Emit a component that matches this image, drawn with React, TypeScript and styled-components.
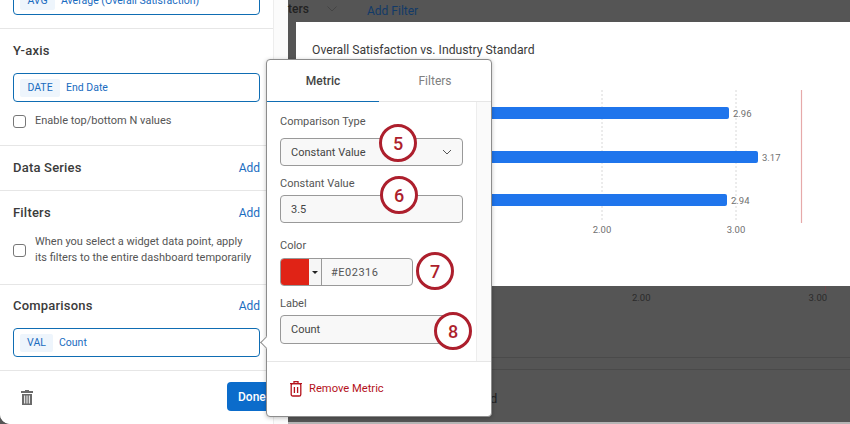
import React from "react";
import styled, { createGlobalStyle } from "styled-components";

const Global = createGlobalStyle`
  html, body { margin: 0; padding: 0; background: #555; }
  * { box-sizing: border-box; }
  body { font-family: Roboto, "Noto Sans", Arial, sans-serif; }
`;

const Page = styled.div`
  position: relative;
  width: 850px;
  height: 424px;
  overflow: hidden;
  display: flex;
  background: #555;
`;

const Side = styled.aside`
  width: 288px;
  flex: none;
  display: flex;
  background: #fbfbfb;
  border-bottom-left-radius: 10px;
  overflow: hidden;
`;

const Panel = styled.div`
  width: 274px;
  flex: none;
  height: 424px;
  background: #fff;
  border-right: 1px solid #ededed;
  display: flex;
  flex-direction: column;
`;

const Section = styled.section<{ $pad: string; $height: number }>`
  height: ${(p) => p.$height}px;
  flex: none;
  padding: ${(p) => p.$pad};
  border-bottom: 1px solid #e6e6e6;
  display: flex;
  flex-direction: column;
`;

const TitleRow = styled.div`
  display: flex;
  align-items: center;
  justify-content: space-between;
  height: 18px;
  flex: none;
`;

const Title = styled.h3`
  margin: 0;
  font-size: 13px;
  line-height: 18px;
  font-weight: 500;
  letter-spacing: 0.2px;
  color: #3b3b3b;
`;

const AddLink = styled.a`
  font-size: 12px;
  color: #1a6cbf;
`;

const FieldCard = styled.div<{ $gap: number; $offset?: number }>`
  height: 29px;
  flex: none;
  margin-top: ${(p) => p.$offset ?? 13}px;
  border: 1px solid #0f6db3;
  border-radius: 4px;
  display: flex;
  align-items: center;
  gap: ${(p) => p.$gap}px;
  padding: 0 6px;
  color: #1a6cbf;
  font-size: 10.5px;
`;

const Tag = styled.span<{ $width: number }>`
  width: ${(p) => p.$width}px;
  height: 18px;
  background: #eef5fc;
  display: flex;
  align-items: center;
  justify-content: center;
  border-radius: 2px;
`;

const CheckRow = styled.label<{ $mt: number }>`
  margin-top: ${(p) => p.$mt}px;
  display: flex;
  align-items: center;
  gap: 9px;
  font-size: 11px;
  line-height: 16px;
  color: #555;
  white-space: nowrap;
`;

const Check = styled.span`
  width: 13px;
  height: 13px;
  flex: none;
  border: 1px solid #777;
  border-radius: 3px;
  background: #fff;
`;

const Footer = styled.footer`
  flex: 1;
  display: flex;
  align-items: center;
  justify-content: space-between;
  padding: 0 0 2px 21px;
`;

const DoneButton = styled.button`
  width: 46px;
  height: 29px;
  border: 0;
  border-radius: 4px 0 0 4px;
  background: #0b6ccb;
  color: #fff;
  font: 500 12px Roboto, sans-serif;
  text-align: left;
  padding: 0 0 0 11px;
`;

const Main = styled.main`
  flex: 1;
  display: flex;
  flex-direction: column;
  border-bottom: 2px solid #b5b5b5;
`;

const Toolbar = styled.div`
  height: 22px;
  flex: none;
  display: flex;
  align-items: center;
  font-size: 12px;
`;

const ToolbarLabel = styled.span`
  color: #222;
  font-weight: 500;
  width: 38px;
  margin-top: -4px;
`;

const ToolbarIcon = styled.span`
  display: flex;
  margin: -4px 0 0 0;
`;

const ToolbarLink = styled.span`
  color: #123a68;
  margin-left: 29px;
  font-size: 12px;
`;

const ChartCard = styled.div`
  margin-left: 8px;
  height: 264px;
  flex: none;
  background: #fff;
  padding: 20px 0 0 16px;
  display: flex;
  flex-direction: column;
`;

const ChartTitle = styled.div`
  font-size: 12.2px;
  line-height: 17px;
  color: #3a3a3a;
`;

const ChartSvg = styled.svg`
  display: block;
  margin: 11px 0 0 -16px;
  font-family: Roboto, sans-serif;
`;

const GhostAxis = styled.div`
  height: 72px;
  flex: none;
  display: flex;
  align-items: flex-start;
  padding: 5px 0 0 344px;
  gap: 158px;
  font-size: 9.5px;
  line-height: 14px;
  color: #2b2b2b;
  border-bottom: 1px solid #4a4a4a;
`;

const AxisValue = styled.span<{ $tick?: boolean }>`
  position: relative;
  ${(p) =>
    p.$tick
      ? `&::after {
    content: "";
    position: absolute;
    left: 16px;
    top: -5px;
    width: 1px;
    height: 7px;
    background: #6d4a4d;
  }`
      : ""}
`;

const GhostStrip = styled.div`
  height: 12px;
  flex: none;
  border-bottom: 1px solid #4a4a4a;
`;

const GhostRow = styled.div`
  flex: 1;
  padding: 21px 0 0 157px;
  font-size: 13px;
  color: #222;
`;

const Popover = styled.div`
  position: absolute;
  left: 266px;
  top: 59px;
  width: 226px;
  height: 358px;
  background: #fff;
  border: 1px solid #8c8c8c;
  border-radius: 4px;
  box-shadow: 0 1px 4px rgba(0, 0, 0, 0.25);
  display: flex;
  flex-direction: column;
  &::before {
    content: "";
    position: absolute;
    left: -5px;
    top: 278px;
    width: 8px;
    height: 8px;
    background: #fff;
    border-left: 1px solid #8c8c8c;
    border-bottom: 1px solid #8c8c8c;
    transform: rotate(45deg);
  }
`;

const Tabs = styled.div`
  height: 42px;
  flex: none;
  display: flex;
  border-bottom: 1px solid #e6e6e6;
`;

const Tab = styled.div<{ $active?: boolean }>`
  width: 112px;
  display: flex;
  align-items: center;
  justify-content: center;
  font-size: 12px;
  margin-bottom: -1px;
  font-weight: ${(p) => (p.$active ? 500 : 400)};
  color: ${(p) => (p.$active ? "#444" : "#808080")};
  border-bottom: 1px solid ${(p) => (p.$active ? "#0f6db3" : "transparent")};
`;

const Body = styled.div`
  height: 260px;
  flex: none;
  display: flex;
  border-bottom: 1px solid #e6e6e6;
`;

const Form = styled.div`
  width: 210px;
  flex: none;
  padding: 12px 13px 0;
  border-right: 1px solid #ededed;
  display: flex;
  flex-direction: column;
`;

const Rail = styled.div`
  flex: 1;
  background: #fafafa;
`;

const FieldLabel = styled.div<{ $mt?: number }>`
  font-size: 11px;
  line-height: 16px;
  color: #555;
  margin-top: ${(p) => p.$mt ?? 0}px;
`;

const Control = styled.div<{ $height: number; $mt: number }>`
  height: ${(p) => p.$height}px;
  margin-top: ${(p) => p.$mt}px;
  flex: none;
  background: #f8f8f8;
  border: 1px solid #999;
  border-radius: 4px;
  padding: 0 10px;
  display: flex;
  align-items: center;
  justify-content: space-between;
  font-size: 11px;
  color: #444;
`;

const ColorPicker = styled.div`
  width: 133px;
  height: 28px;
  margin-top: 4px;
  flex: none;
  display: flex;
  border: 1px solid #999;
  border-radius: 4px;
  overflow: hidden;
  background: #f8f8f8;
`;

const Swatch = styled.div`
  width: 28px;
  background: #e02316;
`;

const Caret = styled.div`
  width: 13px;
  display: flex;
  align-items: center;
  justify-content: center;
  border-right: 1px solid #999;
  background: #f6f6f6;
  &::after {
    content: "";
    border: 3px solid transparent;
    border-top: 3px solid #222;
    border-bottom: 0;
  }
`;

const HexValue = styled.div`
  flex: 1;
  display: flex;
  align-items: center;
  padding-left: 9px;
  font-size: 11px;
  letter-spacing: 0.5px;
  color: #555;
`;

const Remove = styled.div`
  flex: 1;
  display: flex;
  align-items: center;
  gap: 6px;
  padding: 0 0 2px 22px;
  font-size: 11.2px;
  color: #b5121b;
`;

const Callout = styled.div<{ $x: number; $y: number }>`
  position: absolute;
  left: ${(p) => p.$x - 19}px;
  top: ${(p) => p.$y - 19}px;
  width: 38px;
  height: 38px;
  border-radius: 50%;
  background: #fff;
  border: 3px solid #ad1f2d;
  color: #ad1f2d;
  display: flex;
  align-items: center;
  justify-content: center;
  font-size: 18px;
  font-weight: 500;
`;

const GreyTrash = () => (
  <svg width="12" height="16" viewBox="0 0 12 16">
    <path d="M4 1h4v1h4v2H0V2h4z" fill="#6a6a6a" />
    <path d="M1 5h10v11H1z" fill="#6a6a6a" />
    <path d="M3 6.5h1.2v8H3zM5.4 6.5h1.2v8H5.4zM7.8 6.5H9v8H7.8z" fill="#e4e4e4" />
  </svg>
);

const RedTrash = () => (
  <svg width="14" height="17" viewBox="0 0 14 17" fill="none" stroke="#b5121b" strokeWidth="1.3">
    <path d="M1 3.6h12M5 3.4V1.6h4v1.8" />
    <rect x="2.2" y="3.6" width="9.6" height="12.4" rx="1.6" />
    <path d="M5.4 7v6M8.6 7v6" />
  </svg>
);

const Chevron = () => (
  <svg width="12" height="8" viewBox="0 0 12 8" fill="none" stroke="#444" strokeWidth="1">
    <path d="M1.5 1.5 6 6l4.5-4.5" />
  </svg>
);

const bars = [
  { y: 37, end: 433, label: "2.96" },
  { y: 81, end: 462, label: "3.17" },
  { y: 124, end: 431, label: "2.94" },
];

const Chart = () => (
  <ChartSvg width="554" height="216" viewBox="0 0 554 216">
    {[306, 440].map((x) => (
      <line key={x} x1={x} x2={x} y1="20" y2="152" stroke="#d8d8d8" strokeDasharray="2 2" />
    ))}
    <line x1="505.5" x2="505.5" y1="20" y2="153" stroke="#e6a9a9" strokeWidth="1.2" />
    {bars.map((b) => (
      <g key={b.label}>
        <rect x="150" y={b.y} width={b.end - 150} height="12" rx="2" fill="#1f75ec" />
        <text x={b.end + 4} y={b.y + 10} fontSize="9.5" fill="#707070">
          {b.label}
        </text>
      </g>
    ))}
    <text x="306" y="163" fontSize="9.5" fill="#707070" textAnchor="middle">2.00</text>
    <text x="440" y="163" fontSize="9.5" fill="#707070" textAnchor="middle">3.00</text>
  </ChartSvg>
);

export default function App() {
  return (
    <Page>
      <Global />
      <Side>
        <Panel>
          <Section $pad="0 13px" $height={29}>
            <FieldCard $gap={6} $offset={-14}>
              <Tag $width={35}>AVG</Tag>
              <span>Average (Overall Satisfaction)</span>
            </FieldCard>
          </Section>
          <Section $pad="13px 13px 0" $height={117}>
            <TitleRow><Title>Y-axis</Title></TitleRow>
            <FieldCard $gap={6}>
              <Tag $width={40}>DATE</Tag>
              <span>End Date</span>
            </FieldCard>
            <CheckRow $mt={11}><Check />Enable top/bottom N values</CheckRow>
          </Section>
          <Section $pad="13px 13px 0" $height={45}>
            <TitleRow><Title>Data Series</Title><AddLink>Add</AddLink></TitleRow>
          </Section>
          <Section $pad="13px 13px 0" $height={94}>
            <TitleRow><Title>Filters</Title><AddLink>Add</AddLink></TitleRow>
            <CheckRow $mt={12}>
              <Check />
              <span>When you select a widget data point, apply<br />its filters to the entire dashboard temporarily</span>
            </CheckRow>
          </Section>
          <Section $pad="12px 13px 0" $height={86}>
            <TitleRow><Title>Comparisons</Title><AddLink>Add</AddLink></TitleRow>
            <FieldCard $gap={6}>
              <Tag $width={33}>VAL</Tag>
              <span>Count</span>
            </FieldCard>
          </Section>
          <Footer>
            <GreyTrash />
            <DoneButton>Done</DoneButton>
          </Footer>
        </Panel>
      </Side>
      <Main>
        <Toolbar>
          <ToolbarLabel>ters</ToolbarLabel>
          <ToolbarIcon><Chevron /></ToolbarIcon>
          <ToolbarLink>Add Filter</ToolbarLink>
        </Toolbar>
        <ChartCard>
          <ChartTitle>Overall Satisfaction vs. Industry Standard</ChartTitle>
          <Chart />
        </ChartCard>
        <GhostAxis>
          <AxisValue>2.00</AxisValue>
          <AxisValue $tick>3.00</AxisValue>
        </GhostAxis>
        <GhostStrip />
        <GhostRow>Standard</GhostRow>
      </Main>
      <Popover>
        <Tabs>
          <Tab $active>Metric</Tab>
          <Tab>Filters</Tab>
        </Tabs>
        <Body>
          <Form>
            <FieldLabel>Comparison Type</FieldLabel>
            <Control $height={28} $mt={8}>
              Constant Value
              <svg width="10" height="6" viewBox="0 0 10 6" fill="none" stroke="#555" strokeWidth="1">
                <path d="M1 1l4 4 4-4" />
              </svg>
            </Control>
            <FieldLabel $mt={10}>Constant Value</FieldLabel>
            <Control $height={28} $mt={3}>3.5</Control>
            <FieldLabel $mt={15}>Color</FieldLabel>
            <ColorPicker>
              <Swatch />
              <Caret />
              <HexValue>#E02316</HexValue>
            </ColorPicker>
            <FieldLabel $mt={10}>Label</FieldLabel>
            <Control $height={29} $mt={3}>Count</Control>
          </Form>
          <Rail />
        </Body>
        <Remove>
          <RedTrash />
          Remove Metric
        </Remove>
      </Popover>
      <Callout $x={398} $y={143}>5</Callout>
      <Callout $x={399} $y={195}>6</Callout>
      <Callout $x={435} $y={271}>7</Callout>
      <Callout $x={453} $y={331}>8</Callout>
    </Page>
  );
}
